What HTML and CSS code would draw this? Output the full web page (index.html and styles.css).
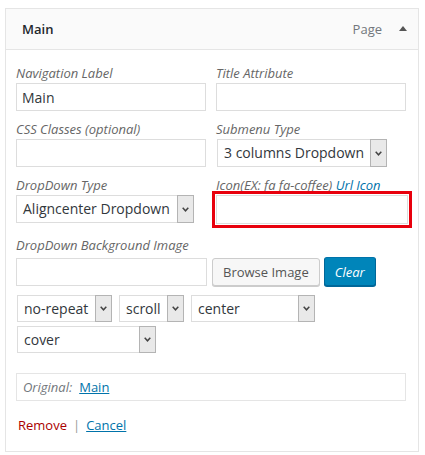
FILE: index.html
```html
<!DOCTYPE html>
<html lang="en">
<head>
  <meta charset="UTF-8">
  <meta name="viewport" content="width=device-width, initial-scale=1.0">
  <title>Menu Item - Main</title>
  <link rel="stylesheet" href="styles.css">
</head>
<body>
  <div class="menu-item">
    <div class="item-bar">
      <span class="item-title">Main</span>
      <span class="item-controls">
        <span class="item-type">Page</span>
        <span class="item-toggle"></span>
      </span>
    </div>

    <div class="item-settings">
      <div class="field-row">
        <div class="field">
          <label class="field-label" for="nav-label">Navigation Label</label>
          <input class="text-input" type="text" id="nav-label" value="Main">
        </div>
        <div class="field">
          <label class="field-label" for="title-attr">Title Attribute</label>
          <input class="text-input" type="text" id="title-attr">
        </div>
      </div>

      <div class="field-row">
        <div class="field">
          <label class="field-label" for="css-classes">CSS Classes (optional)</label>
          <input class="text-input" type="text" id="css-classes">
        </div>
        <div class="field">
          <span class="field-label">Submenu Type</span>
          <div class="select select-submenu">
            <span class="select-value">3 columns Dropdown</span>
            <span class="select-arrow"><svg width="7" height="5" viewBox="0 0 7 5"><path d="M0.7 0.8 L3.5 3.8 L6.3 0.8" fill="none" stroke="#444" stroke-width="1.5"/></svg></span>
          </div>
        </div>
      </div>

      <div class="field-row field-row-tall">
        <div class="field">
          <span class="field-label">DropDown Type</span>
          <div class="select select-type">
            <span class="select-value">Aligncenter Dropdown</span>
            <span class="select-arrow"><svg width="7" height="5" viewBox="0 0 7 5"><path d="M0.7 0.8 L3.5 3.8 L6.3 0.8" fill="none" stroke="#444" stroke-width="1.5"/></svg></span>
          </div>
        </div>
        <div class="field">
          <label class="field-label" for="menu-icon">Icon(EX: fa fa-coffee) <a class="label-link" href="#">Url Icon</a></label>
          <input class="text-input highlight" type="text" id="menu-icon">
        </div>
      </div>

      <div class="bg-image">
        <label class="field-label" for="bg-url">DropDown Background Image</label>
        <div class="bg-image-controls">
          <input class="text-input bg-url" type="text" id="bg-url">
          <button class="button" type="button">Browse Image</button>
          <button class="button button-primary" type="button">Clear</button>
        </div>
      </div>

      <div class="select-row">
        <div class="select select-small w-repeat">
          <span class="select-value">no-repeat</span>
          <span class="select-arrow"><svg width="7" height="5" viewBox="0 0 7 5"><path d="M0.7 0.8 L3.5 3.8 L6.3 0.8" fill="none" stroke="#444" stroke-width="1.5"/></svg></span>
        </div>
        <div class="select select-small w-scroll">
          <span class="select-value">scroll</span>
          <span class="select-arrow"><svg width="7" height="5" viewBox="0 0 7 5"><path d="M0.7 0.8 L3.5 3.8 L6.3 0.8" fill="none" stroke="#444" stroke-width="1.5"/></svg></span>
        </div>
        <div class="select select-small w-position">
          <span class="select-value">center</span>
          <span class="select-arrow"><svg width="7" height="5" viewBox="0 0 7 5"><path d="M0.7 0.8 L3.5 3.8 L6.3 0.8" fill="none" stroke="#444" stroke-width="1.5"/></svg></span>
        </div>
      </div>
      <div class="select-row select-row-second">
        <div class="select select-small w-size">
          <span class="select-value">cover</span>
          <span class="select-arrow"><svg width="7" height="5" viewBox="0 0 7 5"><path d="M0.7 0.8 L3.5 3.8 L6.3 0.8" fill="none" stroke="#444" stroke-width="1.5"/></svg></span>
        </div>
      </div>

      <div class="original">
        <span class="original-label">Original:</span>
        <a class="link" href="#">Main</a>
      </div>

      <div class="item-actions">
        <a class="remove" href="#">Remove</a>
        <span class="sep">|</span>
        <a class="link cancel" href="#">Cancel</a>
      </div>
    </div>
  </div>
</body>
</html>
```

FILE: styles.css
```css
* {
  box-sizing: border-box;
}
body {
  margin: 0;
  background-color: #fff;
  font-family: "Open Sans", "Liberation Sans", sans-serif;
  color: #444;
}
.menu-item {
  width: 414px;
  margin: 8px 0 0 5px;
  border: 1px solid #e5e5e5;
  background-color: #fff;
}
.item-bar {
  display: flex;
  align-items: center;
  justify-content: space-between;
  height: 41px;
  padding: 0 11px 1px 16px;
  background-color: #fafafa;
  border-bottom: 1px solid #e5e5e5;
}
.item-title {
  font-size: 13px;
  font-weight: 600;
  color: #23282d;
}
.item-controls {
  display: flex;
  align-items: center;
}
.item-type {
  font-size: 13px;
  color: #72777c;
}
.item-toggle {
  width: 0;
  height: 0;
  margin-left: 17px;
  margin-top: -1px;
  border-left: 4px solid transparent;
  border-right: 4px solid transparent;
  border-bottom: 5px solid #555;
}
.item-settings {
  padding: 14px 12px 17px 10px;
}
.field-row {
  display: grid;
  grid-template-columns: 190px 190px;
  column-gap: 10px;
  margin-bottom: 9px;
}
.field-row-tall {
  margin-bottom: 12px;
}
.field-label {
  display: block;
  font-size: 13px;
  font-style: italic;
  line-height: 18px;
  color: #666;
  margin-bottom: 1px;
}
.label-link {
  color: #0073aa;
  text-decoration: none;
}
.text-input {
  display: block;
  width: 100%;
  height: 28px;
  margin: 0;
  padding: 0 5px;
  border: 1px solid #ddd;
  font-family: inherit;
  font-size: 14px;
  color: #32373c;
  background-color: #fff;
}
.highlight {
  width: 192px;
  height: 29px;
  outline: 3px solid #e8000d;
  outline-offset: 1px;
}
.select {
  display: flex;
  height: 28px;
  border: 1px solid #ddd;
  background-color: #fff;
}
.select-value {
  flex: 1;
  padding-left: 6px;
  font-size: 14px;
  line-height: 26px;
  color: #32373c;
  white-space: nowrap;
  overflow: hidden;
}
.select-arrow {
  display: flex;
  align-items: center;
  justify-content: center;
  width: 17px;
  margin: -1px -1px -1px 0;
  border: 1px solid #b4b4b4;
  background-color: #e9e9e9;
}
.select-submenu {
  width: 170px;
  margin-left: 1px;
}
.select-type {
  width: 178px;
}
.bg-image .field-label {
  margin-bottom: 3px;
}
.bg-image-controls {
  display: flex;
  align-items: center;
  gap: 5px;
}
.bg-url {
  width: 191px;
}
.button {
  height: 28px;
  padding: 0 10px;
  border: 1px solid #ccc;
  border-radius: 3px;
  background-color: #f7f7f7;
  font-family: inherit;
  font-size: 13px;
  color: #555;
  box-shadow: 0 1px 0 #ccc;
}
.button-primary {
  height: 29px;
  margin-left: -1px;
  padding: 0 10px;
  background-color: #0085ba;
  border-color: #0073aa #006799 #006799;
  color: #fff;
  font-style: italic;
  box-shadow: 0 1px 0 #006799;
}
.select-row {
  display: flex;
  gap: 7px;
  margin-top: 9px;
  padding-left: 1px;
}
.select-row-second {
  margin-top: 4px;
}
.select-small {
  height: 27px;
}
.select-small .select-value {
  line-height: 25px;
}
.w-repeat {
  width: 95px;
}
.w-scroll {
  width: 65px;
}
.w-position {
  width: 124px;
}
.w-size {
  width: 139px;
}
.original {
  display: flex;
  align-items: center;
  gap: 7px;
  height: 28px;
  margin-top: 20px;
  padding-left: 6px;
  border: 1px solid #e5e5e5;
  font-size: 13px;
}
.original-label {
  font-style: italic;
  color: #72777c;
}
.link {
  color: #0073aa;
  text-decoration: underline;
}
.item-actions {
  display: flex;
  align-items: center;
  gap: 6px;
  margin-top: 15px;
  padding-left: 2px;
  font-size: 13px;
  line-height: 18px;
}
.remove {
  color: #a00;
  text-decoration: none;
}
.sep {
  color: #999;
}
```
